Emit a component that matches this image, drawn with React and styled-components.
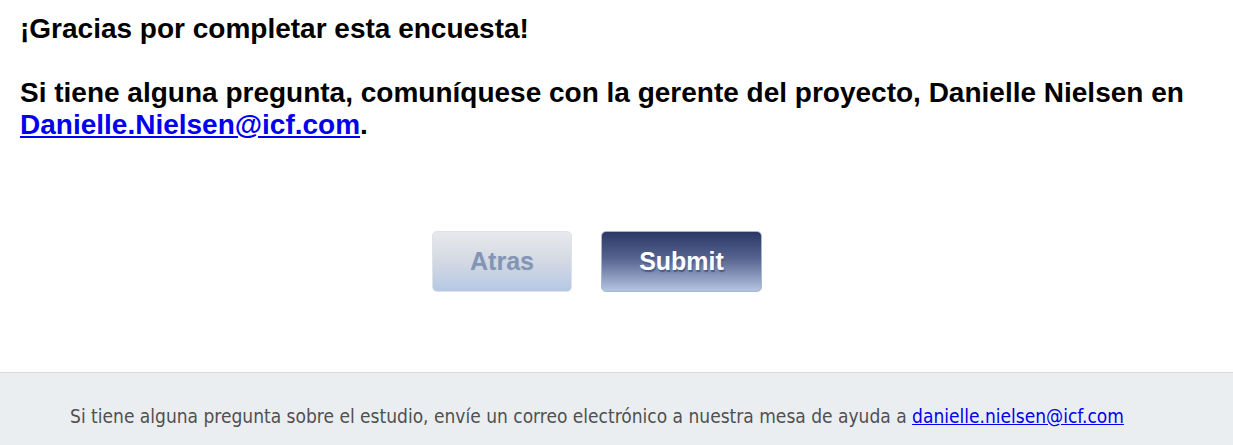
import React from 'react'
import styled, { createGlobalStyle } from 'styled-components'

const GlobalStyle = createGlobalStyle`
  html, body {
    margin: 0;
    padding: 0;
    background: #ffffff;
  }
  body {
    font-family: 'Liberation Sans', Arial, sans-serif;
  }
`

const Page = styled.div`
  display: flex;
  flex-direction: column;
  min-height: 445px;
`

const Main = styled.div`
  padding: 13px 20px 0 20px;
`

const Message = styled.p`
  margin: 0;
  font-size: 28px;
  font-weight: bold;
  color: #000;
  line-height: 32px;
`

const MailLink = styled.a`
  color: ${props => props.color || '#0000ee'};
  text-decoration: underline;
`

const ButtonRow = styled.div`
  display: flex;
  justify-content: center;
  gap: 29px;
  margin-top: 90px;
  padding-right: 39px;
`

const NavButton = styled.button`
  width: ${props => props.width}px;
  height: 61px;
  border-radius: 5px;
  font-family: 'Liberation Sans', Arial, sans-serif;
  font-size: 25px;
  font-weight: bold;
  cursor: pointer;
  padding: 0;
  border: 1px solid ${props => (props.primary ? '#aab6cc' : '#dde1e8')};
  background: ${props =>
    props.primary
      ? 'linear-gradient(to bottom, #2b3867 0%, #56648f 45%, #b4c4e2 100%)'
      : 'linear-gradient(to bottom, #e8e9ec 0%, #d3d9e3 50%, #b6c8e4 100%)'};
  color: ${props => (props.primary ? '#ffffff' : '#8395b5')};
  text-shadow: ${props =>
    props.primary ? '1px 2px 1px #4a5a8a' : '1px 1px 1px #c7cfdd'};
`

const Footer = styled.footer`
  margin-top: 80px;
  flex: 1;
  background: #ebeef1;
  border-top: 1px solid #d6dbe0;
  padding: 32px 39px 0 0;
  text-align: center;
`

const FooterText = styled.span`
  font-family: Tahoma, 'DejaVu Sans Condensed', 'DejaVu Sans', sans-serif;
  font-size: 19px;
  color: #505050;
`

export default function App() {
  return (
    <Page>
      <GlobalStyle />
      <Main>
        <Message>¡Gracias por completar esta encuesta!</Message>
        <Message>&nbsp;</Message>
        <Message>
          Si tiene alguna pregunta, comuníquese con la gerente del proyecto, Danielle Nielsen en{' '}
          <MailLink href='mailto:Danielle.Nielsen@icf.com'>Danielle.Nielsen@icf.com</MailLink>.
        </Message>
        <ButtonRow>
          <NavButton width={140}>Atras</NavButton>
          <NavButton width={161} primary>
            Submit
          </NavButton>
        </ButtonRow>
      </Main>
      <Footer>
        <FooterText>
          Si tiene alguna pregunta sobre el estudio, envíe un correo electrónico a nuestra mesa de ayuda a{' '}
          <MailLink href='mailto:danielle.nielsen@icf.com'>danielle.nielsen@icf.com</MailLink>
        </FooterText>
      </Footer>
    </Page>
  )
}
